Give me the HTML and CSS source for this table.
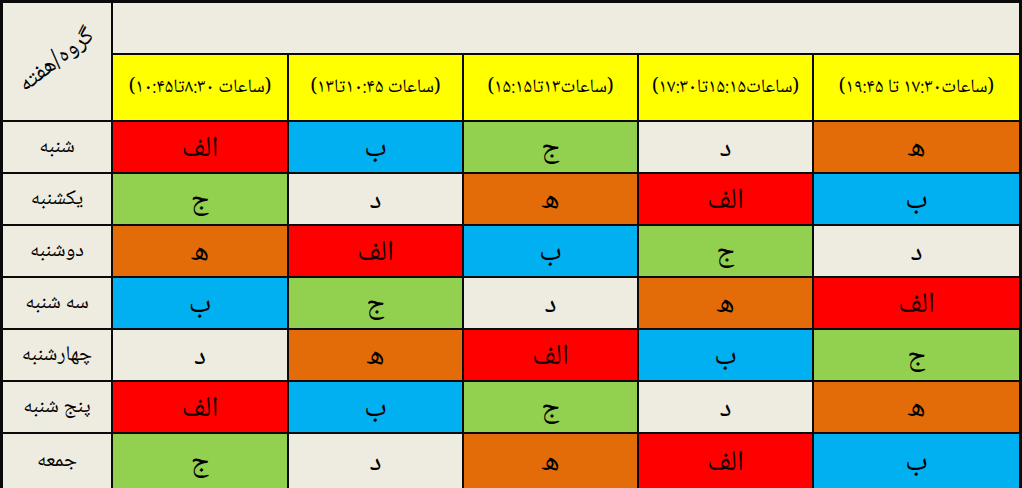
FILE: index.html
```html
<!DOCTYPE html>
<html lang="fa">
<head>
<meta charset="utf-8">
<title>برنامه گروه‌ها</title>
<link rel="stylesheet" href="styles.css">
</head>
<body>
<div class="schedule">
  <div class="cell corner"><span class="corner-label" dir="rtl">گروه/هفته</span></div>
  <div class="cell top-blank"></div>

  <div class="cell time" dir="rtl">(ساعات ۸:۳۰تا۱۰:۴۵)</div>
  <div class="cell time" dir="rtl">(ساعات ۱۰:۴۵تا۱۳)</div>
  <div class="cell time" dir="rtl">(ساعات۱۳تا۱۵:۱۵)</div>
  <div class="cell time" dir="rtl">(ساعات۱۵:۱۵تا۱۷:۳۰)</div>
  <div class="cell time" dir="rtl">(ساعات۱۷:۳۰ تا ۱۹:۴۵)</div>

  <div class="cell day" dir="rtl">شنبه</div>
  <div class="cell g red">الف</div>
  <div class="cell g blue">ب</div>
  <div class="cell g green">ج</div>
  <div class="cell g gray">د</div>
  <div class="cell g orange">ه</div>

  <div class="cell day" dir="rtl">یکشنبه</div>
  <div class="cell g green">ج</div>
  <div class="cell g gray">د</div>
  <div class="cell g orange">ه</div>
  <div class="cell g red">الف</div>
  <div class="cell g blue">ب</div>

  <div class="cell day" dir="rtl">دوشنبه</div>
  <div class="cell g orange">ه</div>
  <div class="cell g red">الف</div>
  <div class="cell g blue">ب</div>
  <div class="cell g green">ج</div>
  <div class="cell g gray">د</div>

  <div class="cell day" dir="rtl">سه شنبه</div>
  <div class="cell g blue">ب</div>
  <div class="cell g green">ج</div>
  <div class="cell g gray">د</div>
  <div class="cell g orange">ه</div>
  <div class="cell g red">الف</div>

  <div class="cell day" dir="rtl">چهارشنبه</div>
  <div class="cell g gray">د</div>
  <div class="cell g orange">ه</div>
  <div class="cell g red">الف</div>
  <div class="cell g blue">ب</div>
  <div class="cell g green">ج</div>

  <div class="cell day" dir="rtl">پنج شنبه</div>
  <div class="cell g red">الف</div>
  <div class="cell g blue">ب</div>
  <div class="cell g green">ج</div>
  <div class="cell g gray">د</div>
  <div class="cell g orange">ه</div>

  <div class="cell day" dir="rtl">جمعه</div>
  <div class="cell g green">ج</div>
  <div class="cell g gray">د</div>
  <div class="cell g orange">ه</div>
  <div class="cell g red">الف</div>
  <div class="cell g blue">ب</div>
</div>
</body>
</html>
```

FILE: styles.css
```css
html, body {
  margin: 0;
  padding: 0;
  background: #eeece1;
  overflow: hidden;
}

body {
  width: 1022px;
  height: 488px;
  font-family: "Noto Naskh Arabic", "Noto Sans Arabic", "DejaVu Sans", sans-serif;
  color: #000;
}

.schedule {
  display: grid;
  grid-template-columns: 108px 174px 173px 173px 173px 205px;
  grid-template-rows: 50px 65px repeat(6, 50px) 54px;
  gap: 2px;
  padding: 3px 3px 0 3px;
  background: #0a0a0a;
  width: 1022px;
  box-sizing: border-box;
}

.cell {
  display: flex;
  align-items: center;
  justify-content: center;
  background: #eeece1;
  box-sizing: border-box;
  min-height: 0;
}

.corner {
  grid-row: 1 / span 2;
  grid-column: 1;
}

.corner-label {
  display: block;
  font-size: 24px;
  line-height: 1.2;
  white-space: nowrap;
  transform: rotate(-38deg);
}

.top-blank {
  grid-column: 2 / span 5;
}

.time {
  background: #ffff00;
  font-size: 19px;
  line-height: 1.2;
  white-space: nowrap;
  padding-top: 2px;
}

.day {
  font-size: 21px;
  line-height: 1.2;
  white-space: nowrap;
  padding-top: 2px;
}

.g {
  font-size: 29px;
  line-height: 1.2;
  padding-top: 6px;
}

.red { background: #ff0000; color: #1a0000; }
.blue { background: #00b0f0; }
.green { background: #92d050; }
.gray { background: #eeece1; }
.orange { background: #e36c09; }
```
